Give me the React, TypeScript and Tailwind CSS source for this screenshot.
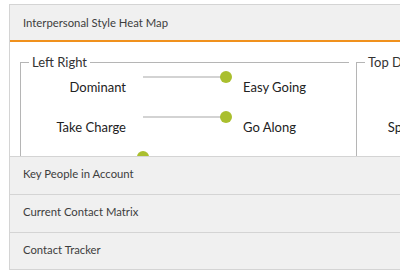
import React from "react";

type Row = { left: string; right: string; value: number };

const leftRight: Row[] = [
  { left: "Dominant", right: "Easy Going", value: 1 },
  { left: "Take Charge", right: "Go Along", value: 1 },
  { left: "Assertive", right: "Reserved", value: 0 },
];

const topDown: Row[] = [
  { left: "Direct", right: "Indirect", value: 1 },
  { left: "Spontaneous", right: "Planned", value: 1 },
  { left: "Open", right: "Guarded", value: 0 },
];

function Slider({ value }: { value: number }) {
  return (
    <div className="relative w-[95px] h-[12px] shrink-0">
      <div className="absolute left-[6px] right-[6px] top-[5px] h-[2px] bg-[#d3d3d3]" />
      <div
        className="absolute top-0 w-[12px] h-[12px] rounded-full bg-[#aabf2e]"
        style={{ left: `${value * 83}px` }}
      />
    </div>
  );
}

function AxisGroup({ title, rows }: { title: string; rows: Row[] }) {
  return (
    <fieldset className="w-[329px] shrink-0 border-t border-l border-[#b5b5b5] pb-2">
      <legend className="ml-[8px] px-[3px] text-[13px] leading-4 text-[#333]">
        {title}
      </legend>
      {rows.map((r) => (
        <div key={r.left} className="flex items-start h-[40px]">
          <div className="w-[105px] shrink-0 text-right mt-[9px] text-[13px] leading-4 text-[#222]">
            {r.left}
          </div>
          <div className="ml-[11px] mt-[1px]">
            <Slider value={r.value} />
          </div>
          <div className="ml-[11px] mt-[9px] text-[13px] leading-4 text-[#222] whitespace-nowrap">
            {r.right}
          </div>
        </div>
      ))}
    </fieldset>
  );
}

const sections = ["Key People in Account", "Current Contact Matrix", "Contact Tracker"];

export default function App() {
  return (
    <div
      className="w-[400px] h-[280px] overflow-hidden bg-white pt-[4px] pl-[9px]"
      style={{ fontFamily: "Lato, 'Open Sans', sans-serif" }}
    >
      <div className="w-[420px] border-l border-t border-[#d4d4d4]">
        {/* Heat map header */}
        <div className="h-[37px] flex items-center pl-[13px] pt-[2px] bg-[#f0f0f0] border-b-2 border-[#f0911d] text-[11.3px] text-[#3d3d3d]">
          Interpersonal Style Heat Map
        </div>

        {/* Heat map body */}
        <div className="h-[114px] overflow-hidden bg-white flex gap-[7px] pl-[10px] pt-[12px]">
          <AxisGroup title="Left Right" rows={leftRight} />
          <AxisGroup title="Top Down" rows={topDown} />
        </div>

        {/* Collapsed sections */}
        {sections.map((s, i) => (
          <div
            key={s}
            className={
              "h-[38px] flex items-center pl-[13px] pb-[2px] bg-[#f0f0f0] border-t border-[#d4d4d4] text-[11.3px] text-[#3d3d3d]" +
              (i === sections.length - 1 ? " border-b" : "")
            }
          >
            {s}
          </div>
        ))}
      </div>
    </div>
  );
}
